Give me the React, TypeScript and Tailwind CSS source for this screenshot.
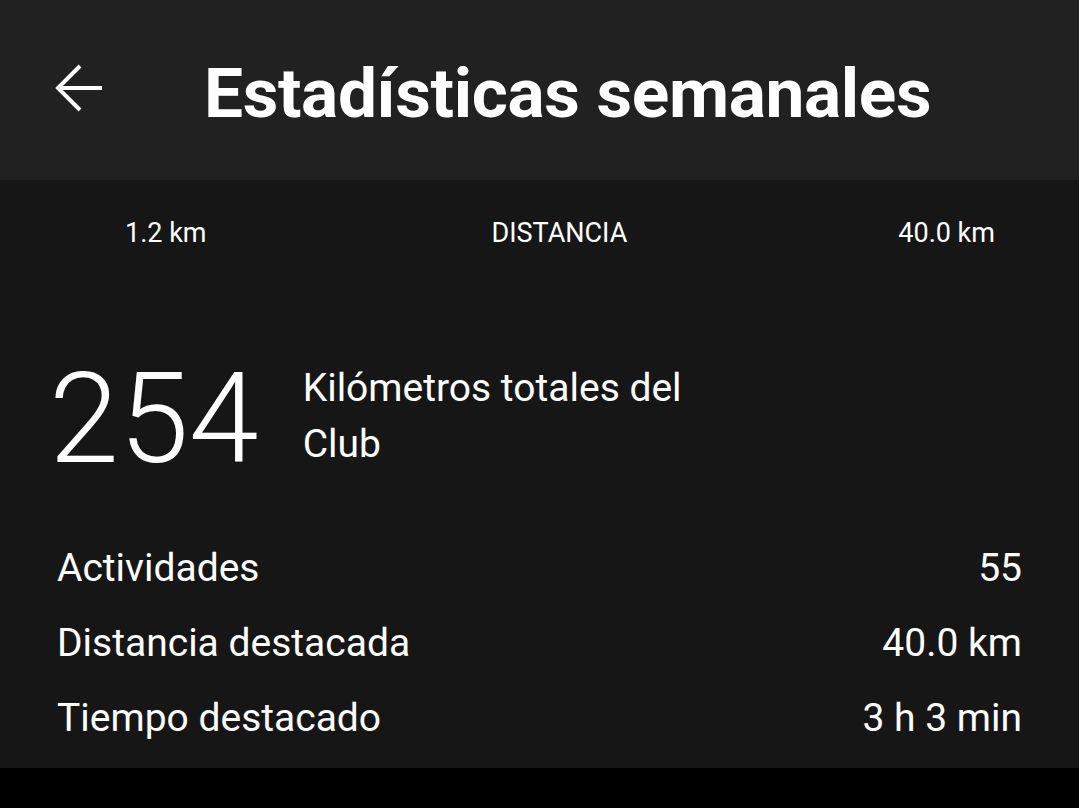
import React from "react";

function BackArrow() {
  return (
    <svg width="50" height="50" viewBox="0 0 50 50" fill="none" aria-hidden="true">
      <path d="M4 24H48M26 2L4 24L26 46" stroke="#ffffff" strokeWidth="4" strokeLinejoin="miter" />
    </svg>
  );
}

const rows = [
  { label: "Actividades", value: "55" },
  { label: "Distancia destacada", value: "40.0 km" },
  { label: "Tiempo destacado", value: "3 h 3 min" },
];

export default function App() {
  return (
    <div
      className="h-[808px] w-full bg-black text-white"
      style={{ fontFamily: "Roboto, 'Noto Sans', sans-serif" }}
    >
      <header className="flex h-[180px] items-center bg-[#212121]">
        <div className="ml-[54px] mt-[-2px] flex h-[50px] w-[50px] items-center">
          <BackArrow />
        </div>
        <h1 className="ml-[100px] mt-[8px] text-[69.4px] font-bold leading-none tracking-[-0.005em]">
          Estadísticas semanales
        </h1>
      </header>

      <main className="h-[588px] bg-[#161616]">
        <div className="flex items-center justify-between pl-[125px] pr-[84px] pt-[38px] text-[27px] leading-[30px]">
          <span>1.2 km</span>
          <span className="ml-[14px]">DISTANCIA</span>
          <span>40.0 km</span>
        </div>

        <div className="mt-[108px] flex items-start pl-[49px]">
          <span className="text-[126px] font-light leading-none">254</span>
          <p className="ml-[44px] mt-[4px] w-[400px] text-[39px] leading-[56px]">
            Kilómetros totales del Club
          </p>
        </div>

        <ul className="mt-[49px] px-[57px]">
          {rows.map((r) => (
            <li key={r.label} className="flex h-[75px] items-center justify-between text-[39px] leading-[75px]">
              <span>{r.label}</span>
              <span>{r.value}</span>
            </li>
          ))}
        </ul>
      </main>
    </div>
  );
}
